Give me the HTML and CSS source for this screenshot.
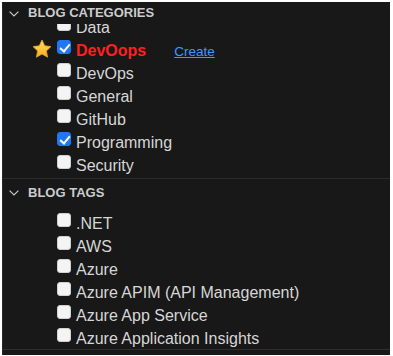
FILE: index.html
```html
<!DOCTYPE html>
<html lang="en">
<head>
  <meta charset="UTF-8" />
  <meta name="viewport" content="width=device-width, initial-scale=1.0"/>
  <title>Blog Categories and Tags</title>
  <link rel="stylesheet" href="styles.css">
</head>
<body>
  <div class="panel">
    <!-- Categories -->
    <section class="group cats">
      <div class="group-head">
        <svg class="chevron" width="10" height="6" viewBox="0 0 10 6"><polyline points="0.6,0.6 5,5 9.4,0.6" /></svg>
        <span>Blog Categories</span>
      </div>
      <div class="group-body">
        <ul class="list">
          <li class="row"><input type="checkbox"><span class="name">Data</span></li>
          <li class="row fav">
            <svg class="star" width="20" height="20" viewBox="0 0 20 20">
              <defs>
                <linearGradient id="gold" x1="0" y1="0" x2="0" y2="1">
                  <stop offset="0" stop-color="#ffe45c"/>
                  <stop offset="1" stop-color="#f7a921"/>
                </linearGradient>
              </defs>
              <polygon points="10,1 12.7,6.8 19,7.6 14.4,11.9 15.6,18.2 10,15.1 4.4,18.2 5.6,11.9 1,7.6 7.3,6.8" />
            </svg>
            <input type="checkbox" checked><span class="name new">DevOops</span>
            <a href="#" class="create">Create</a>
          </li>
          <li class="row"><input type="checkbox"><span class="name">DevOps</span></li>
          <li class="row"><input type="checkbox"><span class="name">General</span></li>
          <li class="row"><input type="checkbox"><span class="name">GitHub</span></li>
          <li class="row"><input type="checkbox" checked><span class="name">Programming</span></li>
          <li class="row"><input type="checkbox"><span class="name">Security</span></li>
        </ul>
      </div>
    </section>

    <!-- Tags -->
    <section class="group tags">
      <div class="group-head">
        <svg class="chevron" width="10" height="6" viewBox="0 0 10 6"><polyline points="0.6,0.6 5,5 9.4,0.6" /></svg>
        <span>Blog Tags</span>
      </div>
      <div class="group-body">
        <ul class="list">
          <li class="row"><input type="checkbox"><span class="name">.NET</span></li>
          <li class="row"><input type="checkbox"><span class="name">AWS</span></li>
          <li class="row"><input type="checkbox"><span class="name">Azure</span></li>
          <li class="row"><input type="checkbox"><span class="name">Azure APIM (API Management)</span></li>
          <li class="row"><input type="checkbox"><span class="name">Azure App Service</span></li>
          <li class="row"><input type="checkbox"><span class="name">Azure Application Insights</span></li>
        </ul>
      </div>
    </section>
  </div>
</body>
</html>
```

FILE: styles.css
```css
* {
  margin: 0;
  padding: 0;
  box-sizing: border-box;
}
html, body {
  width: 100%;
  height: 100%;
  background: #fff;
  font-family: 'Liberation Sans', Arial, sans-serif;
}
.panel {
  margin: 2px 3px 1px 2px;
  height: 353px;
  background: #181818;
  border-left: 1px solid #262626;
  color: #cccccc;
  display: flex;
  flex-direction: column;
  padding-bottom: 5px;
  overflow: hidden;
}
.group-head {
  display: flex;
  align-items: center;
  gap: 9px;
  padding-left: 6px;
  font-size: 13px;
  font-weight: bold;
  text-transform: uppercase;
  color: #cccccc;
  background: #181818;
}
.chevron {
  fill: none;
  stroke: #c8c8c8;
  stroke-width: 1.2;
  margin-top: 1px;
}
.group-body {
  overflow: hidden;
}
.list {
  list-style: none;
}
.row {
  display: flex;
  align-items: flex-start;
  height: 23px;
  padding-left: 54px;
  font-size: 16px;
  line-height: 23px;
  color: #d6d6d6;
}
.row input {
  appearance: none;
  -webkit-appearance: none;
  position: relative;
  flex: none;
  width: 14px;
  height: 14px;
  margin: 1.5px 5px 0 0;
  border-radius: 3px;
  background: #f4f4f4;
  border: 1px solid #d0d0d0;
}
.row input:checked {
  background: #1f78f2;
  border-color: #1f78f2;
}
.row input:checked::after {
  content: '';
  position: absolute;
  left: 3.5px;
  top: 1px;
  width: 4px;
  height: 8px;
  border: solid #fff;
  border-width: 0 2.2px 2.2px 0;
  transform: rotate(40deg);
}

/* categories: header stays on top of the scrolled list */
.cats {
  border-bottom: 1px solid #2b2b2b;
  padding-bottom: 1px;
}
.cats .group-head {
  height: 22px;
  line-height: 22px;
  position: relative;
  z-index: 2;
}
.cats .list {
  margin-top: -8.5px;
}
.fav .star {
  flex: none;
  margin: 0 5px 0 -25px;
}
.star polygon {
  fill: url(#gold);
  stroke: #f0a020;
  stroke-width: 0.8;
  stroke-linejoin: round;
}
.name.new {
  color: #ff1f1f;
  font-weight: bold;
}
.create {
  margin-left: 28px;
  margin-top: 1px;
  font-size: 13.5px;
  color: #3d98ff;
  text-decoration: underline;
}

/* tags */
.tags {
  flex: 1;
  min-height: 0;
  display: flex;
  flex-direction: column;
  border-bottom: 1px solid #2e2e2e;
}
.tags .group-head {
  height: 28px;
  line-height: 28px;
  flex: none;
}
.tags .group-body {
  flex: 1;
  min-height: 0;
  padding-top: 5px;
}
```
